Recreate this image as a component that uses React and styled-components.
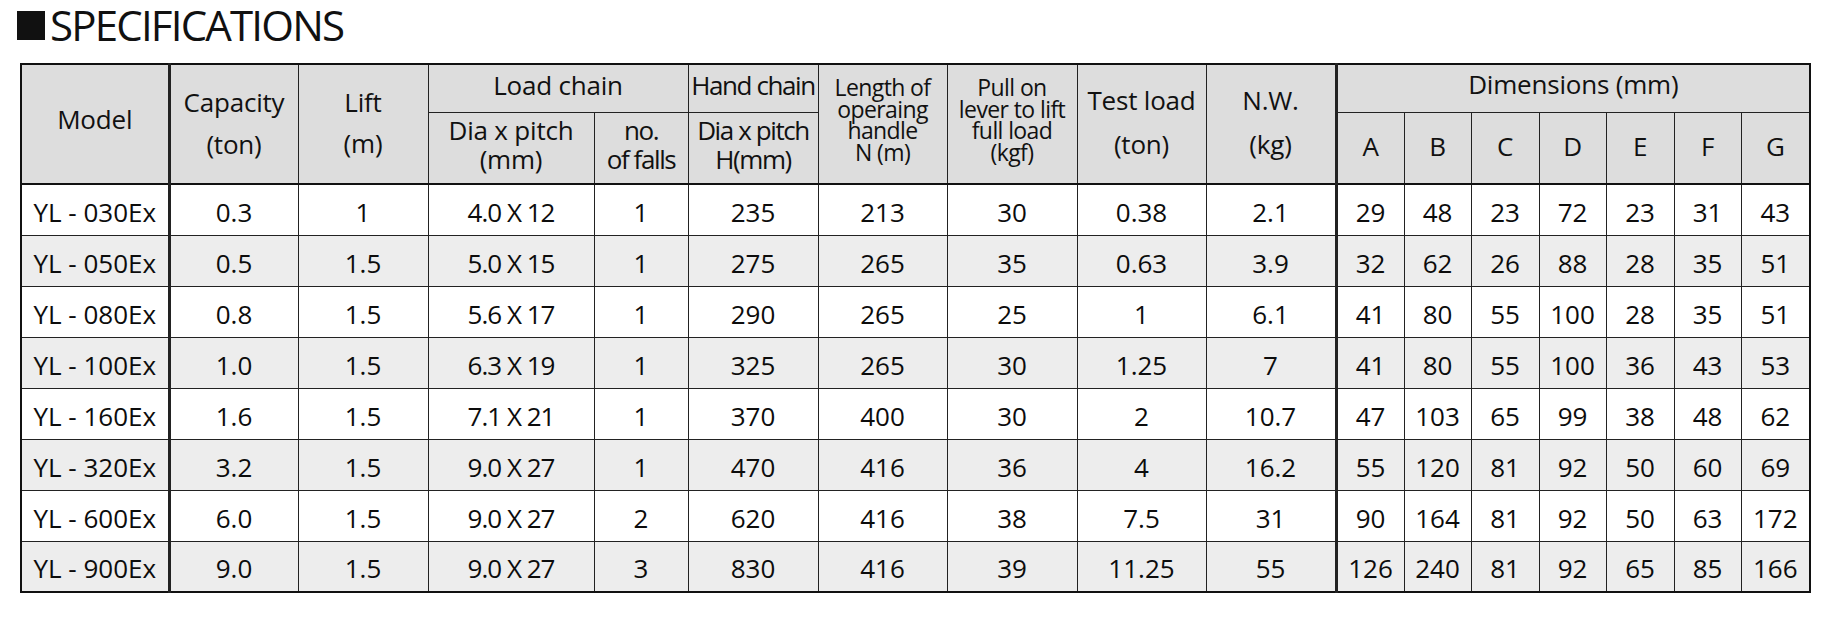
import React from 'react';
import styled, { createGlobalStyle } from 'styled-components';

const GlobalStyle = createGlobalStyle`
  html, body {
    margin: 0;
    padding: 0;
    background: #ffffff;
  }
  body {
    font-family: "Open Sans", "Noto Sans", sans-serif;
    color: #111111;
  }
`

const Page = styled.div`
  width: 1830px;
  height: 620px;
  padding: 0 0 0 20px;
  box-sizing: border-box;
  overflow: hidden;
`

const Title = styled.h1`
  display: flex;
  align-items: center;
  gap: 5px;
  margin: -4px 0 9px -3px;
  font-size: 42px;
  line-height: 58px;
  font-weight: 500;
  letter-spacing: -1.8px;
  color: #111111;
`

const TitleMark = styled.span`
  display: inline-block;
  flex: none;
  width: 28px;
  height: 29px;
  margin-top: 1px;
  background: #111111;
`

const SpecTable = styled.table`
  width: 1789px;
  table-layout: fixed;
  border-collapse: collapse;
  border: 2px solid #111111;
  font-size: 26px;
`

const Head = styled.thead`
  background: #dddddd;
  border-bottom: 2px solid #111111;
`

const HeadCell = styled.th`
  box-sizing: border-box;
  border: 1px solid #222222;
  border-right-width: ${(p) => (p.$thick ? '3px' : '1px')};
  padding: 0 2px ${(p) => p.$lift || 0}px;
  font-weight: 400;
  text-align: center;
  vertical-align: middle;
  height: ${(p) => (p.$low ? '72px' : '48px')};
  line-height: ${(p) => (p.$tight ? '21.5px' : '29px')};
  font-size: ${(p) => (p.$tight ? '23px' : '26px')};
  letter-spacing: ${(p) => (p.$narrow ? '-1.4px' : p.$tight ? '-0.6px' : '-0.2px')};
  white-space: nowrap;
`

const Line = styled.span`
  display: block;
`

const Unit = styled.span`
  display: block;
  margin-top: ${(p) => p.$gap || 0}px;
`

const BodyRow = styled.tr`
  background: ${(p) => (p.$shade ? '#ededed' : '#ffffff')};
`

const Cell = styled.td`
  border: 1px solid #222222;
  border-right-width: ${(p) => (p.$thick ? '3px' : '1px')};
  height: 51px;
  padding: 4px 0 0;
  box-sizing: border-box;
  text-align: center;
  vertical-align: middle;
  font-size: 26px;
  line-height: 30px;
  color: #0c0c0c;
  letter-spacing: ${(p) => (p.$tightText ? '-1px' : '0')};
  white-space: nowrap;
`

const widths = [148, 129, 130, 166, 94, 130, 129, 130, 129, 130, 68, 67, 68, 67, 68, 67, 69];

const rows = [
  ['YL - 030Ex', '0.3', '1', '4.0 X 12', '1', '235', '213', '30', '0.38', '2.1', '29', '48', '23', '72', '23', '31', '43'],
  ['YL - 050Ex', '0.5', '1.5', '5.0 X 15', '1', '275', '265', '35', '0.63', '3.9', '32', '62', '26', '88', '28', '35', '51'],
  ['YL - 080Ex', '0.8', '1.5', '5.6 X 17', '1', '290', '265', '25', '1', '6.1', '41', '80', '55', '100', '28', '35', '51'],
  ['YL - 100Ex', '1.0', '1.5', '6.3 X 19', '1', '325', '265', '30', '1.25', '7', '41', '80', '55', '100', '36', '43', '53'],
  ['YL - 160Ex', '1.6', '1.5', '7.1 X 21', '1', '370', '400', '30', '2', '10.7', '47', '103', '65', '99', '38', '48', '62'],
  ['YL - 320Ex', '3.2', '1.5', '9.0 X 27', '1', '470', '416', '36', '4', '16.2', '55', '120', '81', '92', '50', '60', '69'],
  ['YL - 600Ex', '6.0', '1.5', '9.0 X 27', '2', '620', '416', '38', '7.5', '31', '90', '164', '81', '92', '50', '63', '172'],
  ['YL - 900Ex', '9.0', '1.5', '9.0 X 27', '3', '830', '416', '39', '11.25', '55', '126', '240', '81', '92', '65', '85', '166'],
];

const dims = ['A', 'B', 'C', 'D', 'E', 'F', 'G'];

const App = () => {
  return (
    <Page>
      <GlobalStyle />
      <Title>
        <TitleMark />
        <span>SPECIFICATIONS</span>
      </Title>
      <SpecTable>
        <colgroup>
          {widths.map((w, i) => (
            <col key={i} style={{ width: w }} />
          ))}
        </colgroup>
        <Head>
          <tr>
            <HeadCell rowSpan={2} $thick $lift={9}>Model</HeadCell>
            <HeadCell rowSpan={2} $lift={2}>
              <Line>Capacity</Line>
              <Unit $gap={13}>(ton)</Unit>
            </HeadCell>
            <HeadCell rowSpan={2} $lift={2}>
              <Line>Lift</Line>
              <Unit $gap={12}>(m)</Unit>
            </HeadCell>
            <HeadCell colSpan={2} $lift={6}>Load chain</HeadCell>
            <HeadCell $narrow $lift={6}>Hand chain</HeadCell>
            <HeadCell rowSpan={2} $tight $lift={8}>
              <Line>Length of</Line>
              <Line>operaing</Line>
              <Line>handle</Line>
              <Line>N (m)</Line>
            </HeadCell>
            <HeadCell rowSpan={2} $tight $lift={8}>
              <Line>Pull on</Line>
              <Line>lever to lift</Line>
              <Line>full load</Line>
              <Line>(kgf)</Line>
            </HeadCell>
            <HeadCell rowSpan={2} $lift={4}>
              <Line>Test load</Line>
              <Unit $gap={15}>(ton)</Unit>
            </HeadCell>
            <HeadCell rowSpan={2} $thick $lift={4}>
              <Line>N.W.</Line>
              <Unit $gap={15}>(kg)</Unit>
            </HeadCell>
            <HeadCell colSpan={7} $lift={8}>Dimensions (mm)</HeadCell>
          </tr>
          <tr>
            <HeadCell $low $lift={6}>
              <Line>Dia x pitch</Line>
              <Line>(mm)</Line>
            </HeadCell>
            <HeadCell $low $narrow $lift={6}>
              <Line>no.</Line>
              <Line>of falls</Line>
            </HeadCell>
            <HeadCell $low $narrow $lift={6}>
              <Line>Dia x pitch</Line>
              <Line>H(mm)</Line>
            </HeadCell>
            {dims.map((d) => (
              <HeadCell key={d} $low $lift={3}>{d}</HeadCell>
            ))}
          </tr>
        </Head>
        <tbody>
          {rows.map((r, i) => (
            <BodyRow key={r[0]} $shade={i % 2 === 1}>
              {r.map((v, j) => (
                <Cell key={j} $thick={j === 0 || j === 9} $tightText={j === 3}>
                  {v}
                </Cell>
              ))}
            </BodyRow>
          ))}
        </tbody>
      </SpecTable>
    </Page>
  );
};

export default App;
